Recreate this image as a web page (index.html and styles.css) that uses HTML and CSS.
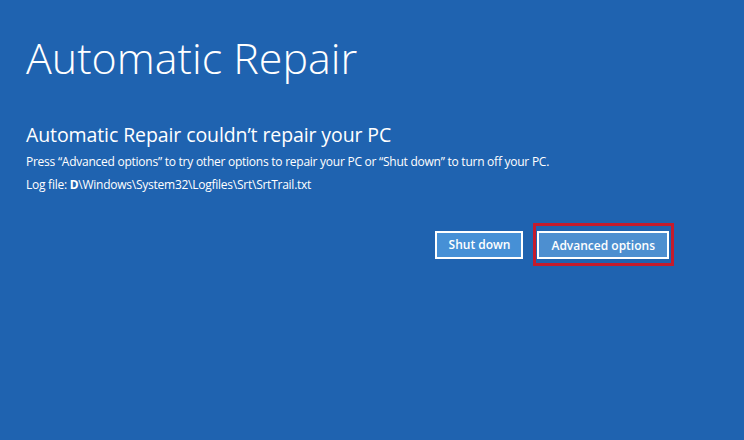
FILE: index.html
```html
<!DOCTYPE html>
<html lang="en">
<head>
<meta charset="utf-8">
<title>Automatic Repair</title>
<link rel="stylesheet" href="styles.css">
</head>
<body>
<main class="screen">
  <h1 class="title">Automatic Repair</h1>
  <h2 class="subtitle">Automatic Repair couldn’t repair your PC</h2>
  <p class="info">Press “Advanced options” to try other options to repair your PC or “Shut down” to turn off your PC.</p>
  <p class="info">Log file: <span class="drive">D</span>\Windows\System32\Logfiles\Srt\SrtTrail.txt</p>
  <div class="actions">
    <button class="btn">Shut down</button>
    <span class="highlight"><button class="btn btn-alt">Advanced options</button></span>
  </div>
</main>
</body>
</html>
```

FILE: styles.css
```css
html, body {
  margin: 0;
  padding: 0;
  height: 100%;
}
body {
  background: #1f63b0;
  color: #ffffff;
  font-family: "Open Sans", "Noto Sans", "Liberation Sans", sans-serif;
}
.screen {
  padding: 36px 0 0 26px;
}
.title {
  margin: 0;
  font-size: 43px;
  line-height: 43px;
  font-weight: 300;
}
.subtitle {
  margin: 44px 0 3px 0;
  font-size: 19.5px;
  line-height: 24px;
  font-weight: 400;
  letter-spacing: -0.1px;
}
.info {
  margin: 0;
  font-size: 12px;
  line-height: 23px;
  letter-spacing: -0.25px;
}
.drive {
  font-weight: 700;
}
.actions {
  display: flex;
  justify-content: flex-end;
  align-items: center;
  gap: 10px;
  margin-top: 27px;
  padding-right: 70px;
}
.btn {
  font-family: inherit;
  font-size: 12px;
  font-weight: 600;
  color: #ffffff;
  background: #4690d6;
  border: 2px solid #ffffff;
  height: 28px;
  padding: 0 11px 0 12px;
  margin: 0;
}
.btn-alt {
  background: #4d8fd0;
  padding: 0 12px;
}
.highlight {
  display: flex;
  border: 3px solid #c41c2d;
  padding: 5px 2px 4px 1px;
}
```
